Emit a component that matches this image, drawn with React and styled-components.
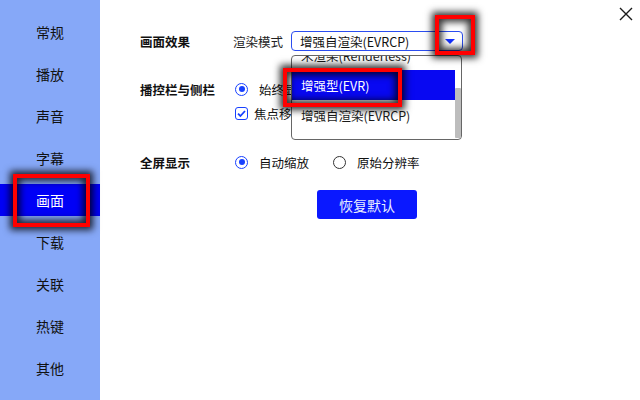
import React from "react";
import styled, { createGlobalStyle } from "styled-components";

const GlobalStyle = createGlobalStyle`
  html, body {
    margin: 0;
    padding: 0;
    background: #ffffff;
  }
  body {
    font-family: "Noto Sans CJK SC", "Noto Sans", sans-serif;
    color: #111;
  }
`;

const menu = ["常规", "播放", "声音", "字幕", "画面", "下载", "关联", "热键", "其他"];
const renderModes = ["未渲染(Renderless)", "增强型(EVR)", "增强自渲染(EVRCP)", "默认"];

export default function App() {
  const active = "画面";
  return (
    <Window>
      <GlobalStyle />
      <Sidebar>
        {menu.map((m) => (
          <NavItem key={m} $active={m === active}>
            {m}
          </NavItem>
        ))}
      </Sidebar>

      <Main>
        <CloseButton aria-label="close">
          <svg width="14" height="14" viewBox="0 0 14 14">
            <path d="M1 1L13 13M13 1L1 13" stroke="#1a1a1a" strokeWidth="1.4" />
          </svg>
        </CloseButton>

        <Form>
          <Row $height={20}>
            <Label>画面效果</Label>
            <Field>
              <SubLabel>渲染模式</SubLabel>
              <SelectWrap>
                <Select>
                  <span>增强自渲染(EVRCP)</span>
                  <Arrow />
                </Select>
                <DropList>
                  <DropInner>
                    {renderModes.map((r, i) => (
                      <DropItem key={r} $selected={i === 1}>
                        {r}
                      </DropItem>
                    ))}
                  </DropInner>
                  <ScrollTrack>
                    <ScrollThumb />
                  </ScrollTrack>
                </DropList>
              </SelectWrap>
            </Field>
          </Row>

          <Row $height={24} $top={26}>
            <Label>播控栏与侧栏</Label>
            <Field>
              <Radio $checked />
              <OptionText>始终显示</OptionText>
            </Field>
          </Row>
          <Row $height={24}>
            <Label />
            <Field>
              <Checkbox>
                <svg width="11" height="11" viewBox="0 0 11 11">
                  <path d="M2 5.6L4.4 8L9 3" fill="none" stroke="#1740ff" strokeWidth="1.8" />
                </svg>
              </Checkbox>
              <OptionText $gap={6}>焦点移出时自动隐藏</OptionText>
            </Field>
          </Row>

          <Row $height={24} $top={25}>
            <Label>全屏显示</Label>
            <Field>
              <Radio $checked />
              <OptionText>自动缩放</OptionText>
              <Radio $left={24} />
              <OptionText>原始分辨率</OptionText>
            </Field>
          </Row>

          <Footer>
            <ResetButton>恢复默认</ResetButton>
          </Footer>
        </Form>
      </Main>

      <Callout $x={13} $y={174} $w={77} $h={53} />
      <Callout $x={435} $y={15} $w={40} $h={40} />
      <Callout $x={283} $y={68} $w={119} $h={39} />
    </Window>
  );
}

const Window = styled.div`
  position: relative;
  width: 640px;
  height: 400px;
  display: flex;
  overflow: hidden;
  background: #ffffff;
`;

const Sidebar = styled.nav`
  width: 100px;
  flex-shrink: 0;
  background: #86a8f8;
  display: flex;
  flex-direction: column;
  gap: 10px;
  padding-top: 16px;
`;

const NavItem = styled.div`
  height: 32px;
  display: flex;
  align-items: center;
  justify-content: center;
  font-size: 14px;
  color: ${(p) => (p.$active ? "#ffffff" : "#111111")};
  background: ${(p) => (p.$active ? "#0000f6" : "transparent")};
`;

const Main = styled.main`
  position: relative;
  flex: 1;
  padding: 31px 0 0 40px;
`;

const CloseButton = styled.div`
  position: absolute;
  top: 7px;
  right: 7px;
  width: 14px;
  height: 14px;
  display: flex;
`;

const Form = styled.div`
  display: flex;
  flex-direction: column;
  font-size: 12.5px;
`;

const Row = styled.div`
  display: flex;
  align-items: center;
  height: ${(p) => p.$height}px;
  margin-top: ${(p) => p.$top || 0}px;
`;

const Label = styled.div`
  width: 94px;
  flex-shrink: 0;
  font-weight: 700;
  color: #111;
`;

const Field = styled.div`
  display: flex;
  align-items: center;
`;

const SubLabel = styled.span`
  width: 58px;
  margin-left: -1px;
  color: #222;
`;

const SelectWrap = styled.div`
  position: relative;
`;

const Select = styled.div`
  width: 172px;
  height: 20px;
  box-sizing: border-box;
  border: 1px solid #2b4df0;
  border-radius: 4px;
  display: flex;
  align-items: center;
  justify-content: space-between;
  padding: 0 7px 0 8px;
  color: #111;
`;

const Arrow = styled.span`
  width: 0;
  height: 0;
  border-left: 5px solid transparent;
  border-right: 5px solid transparent;
  border-top: 5px solid #1430ff;
`;

const DropList = styled.div`
  position: absolute;
  top: 24px;
  left: 0;
  width: 171px;
  height: 85px;
  box-sizing: border-box;
  border: 1px solid #666;
  border-radius: 4px;
  background: #fff;
  overflow: hidden;
  display: flex;
`;

const DropInner = styled.div`
  flex: 1;
  margin-top: -16px;
  display: flex;
  flex-direction: column;
`;

const DropItem = styled.div`
  height: 30px;
  flex-shrink: 0;
  display: flex;
  align-items: center;
  padding-left: 9px;
  color: ${(p) => (p.$selected ? "#ffffff" : "#1a1a1a")};
  background: ${(p) => (p.$selected ? "#0808f2" : "transparent")};
`;

const ScrollTrack = styled.div`
  width: 6px;
  display: flex;
  flex-direction: column;
  justify-content: flex-end;
  padding-bottom: 1px;
`;

const ScrollThumb = styled.div`
  height: 50px;
  background: #bdbdbd;
  border-radius: 1px;
`;

const Radio = styled.span`
  width: 13px;
  height: 13px;
  box-sizing: border-box;
  border-radius: 50%;
  margin-left: ${(p) => (p.$left ? p.$left : 1)}px;
  border: 1.5px solid ${(p) => (p.$checked ? "#1740ff" : "#333")};
  display: flex;
  align-items: center;
  justify-content: center;
  &::after {
    content: "";
    width: 6px;
    height: 6px;
    border-radius: 50%;
    background: ${(p) => (p.$checked ? "#1740ff" : "transparent")};
  }
`;

const Checkbox = styled.span`
  width: 13px;
  height: 13px;
  box-sizing: border-box;
  margin-left: 1px;
  border: 1.5px solid #1740ff;
  border-radius: 3px;
  display: flex;
  align-items: center;
  justify-content: center;
`;

const OptionText = styled.span`
  margin-left: ${(p) => p.$gap || 11}px;
  color: #111;
`;

const Footer = styled.div`
  display: flex;
  margin-top: 16px;
  padding-left: 177px;
`;

const ResetButton = styled.button`
  width: 100px;
  height: 29px;
  border: none;
  border-radius: 3px;
  background: #0a18ff;
  color: #e8eeff;
  font-family: "Noto Sans CJK SC", "Noto Sans", sans-serif;
  font-size: 14px;
  cursor: pointer;
`;

// red highlight frames drawn on top of the window
const Callout = styled.div`
  position: absolute;
  left: ${(p) => p.$x}px;
  top: ${(p) => p.$y}px;
  width: ${(p) => p.$w}px;
  height: ${(p) => p.$h}px;
  box-sizing: border-box;
  border: 4px solid #ff0000;
  box-shadow: 0 0 7px 3px rgba(0, 0, 0, 0.8), inset 0 0 7px 3px rgba(0, 0, 0, 0.8);
  pointer-events: none;
`;
